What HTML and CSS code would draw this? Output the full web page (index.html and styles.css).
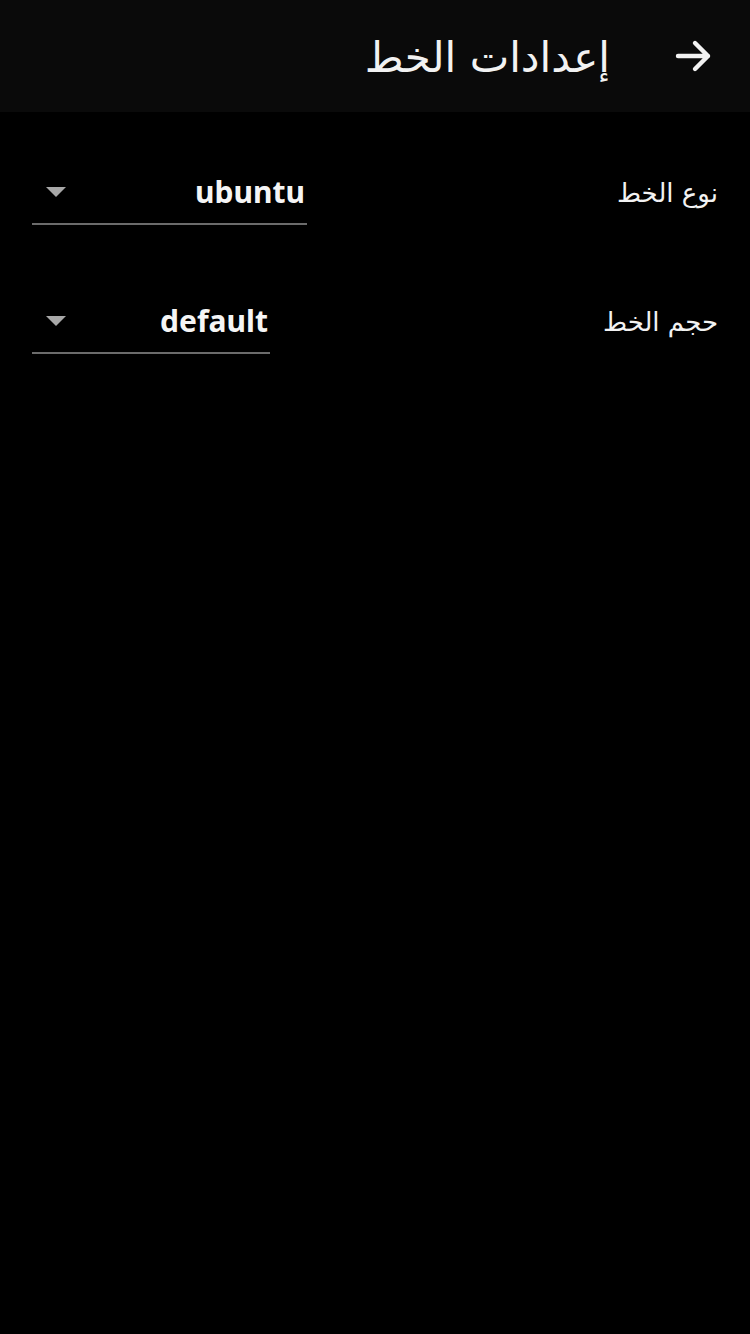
FILE: index.html
```html
<!DOCTYPE html>
<html lang="ar" dir="rtl">
<head>
<meta charset="utf-8">
<link rel="stylesheet" href="styles.css">
</head>
<body>
<header class="appbar">
  <button class="back" aria-label="رجوع">
    <svg viewBox="0 0 24 24" width="48" height="48"><path d="M4 12h15M12.5 5.5L19 12l-6.5 6.5" fill="none" stroke="#f2f2f2" stroke-width="2.2" stroke-linecap="round" stroke-linejoin="round"/></svg>
  </button>
  <h1 class="title">إعدادات الخط</h1>
</header>
<main class="settings">
  <div class="row">
    <span class="label">نوع الخط</span>
    <div class="spinner spinner-type" dir="ltr">
      <span class="caret"></span>
      <span class="value">ubuntu</span>
    </div>
  </div>
  <div class="row">
    <span class="label">حجم الخط</span>
    <div class="spinner spinner-size" dir="ltr">
      <span class="caret"></span>
      <span class="value">default</span>
    </div>
  </div>
</main>
</body>
</html>
```
FILE: styles.css
```css
html, body {
  margin: 0;
  padding: 0;
  background: #000;
  height: 100%;
}
body {
  font-family: "DejaVu Sans", "Noto Sans", sans-serif;
  color: #f2f2f2;
}
.appbar {
  height: 112px;
  background: #0a0a0a;
  display: flex;
  align-items: center;
  padding: 0 32px 0 0;
  gap: 60px;
}
.back {
  background: none;
  border: 0;
  padding: 0;
  width: 48px;
  height: 48px;
  display: flex;
  align-items: center;
  justify-content: center;
}
.title {
  margin: 4px 0 0 0;
  font-weight: normal;
  font-size: 42px;
  color: #f2f2f2;
  line-height: 1;
}
.settings {
  padding: 48px 32px 0 32px;
  display: flex;
  flex-direction: column;
  gap: 63px;
}
.row {
  display: flex;
  justify-content: space-between;
  align-items: flex-start;
}
.label {
  font-size: 26px;
  line-height: 66px;
  color: #f2f2f2;
}
.spinner {
  height: 65px;
  border-bottom: 2px solid #6b6b6b;
  display: flex;
  align-items: center;
  justify-content: space-between;
  box-sizing: border-box;
  padding: 0 2px 0 14px;
}
.spinner-type { width: 275px; }
.spinner-size { width: 238px; }
.caret {
  width: 0;
  height: 0;
  border-left: 10px solid transparent;
  border-right: 10px solid transparent;
  border-top: 10px solid #a8a8a8;
}
.value {
  font-family: "Noto Sans", "DejaVu Sans", sans-serif;
  font-weight: bold;
  font-size: 30px;
  color: #f5f5f5;
}
```
